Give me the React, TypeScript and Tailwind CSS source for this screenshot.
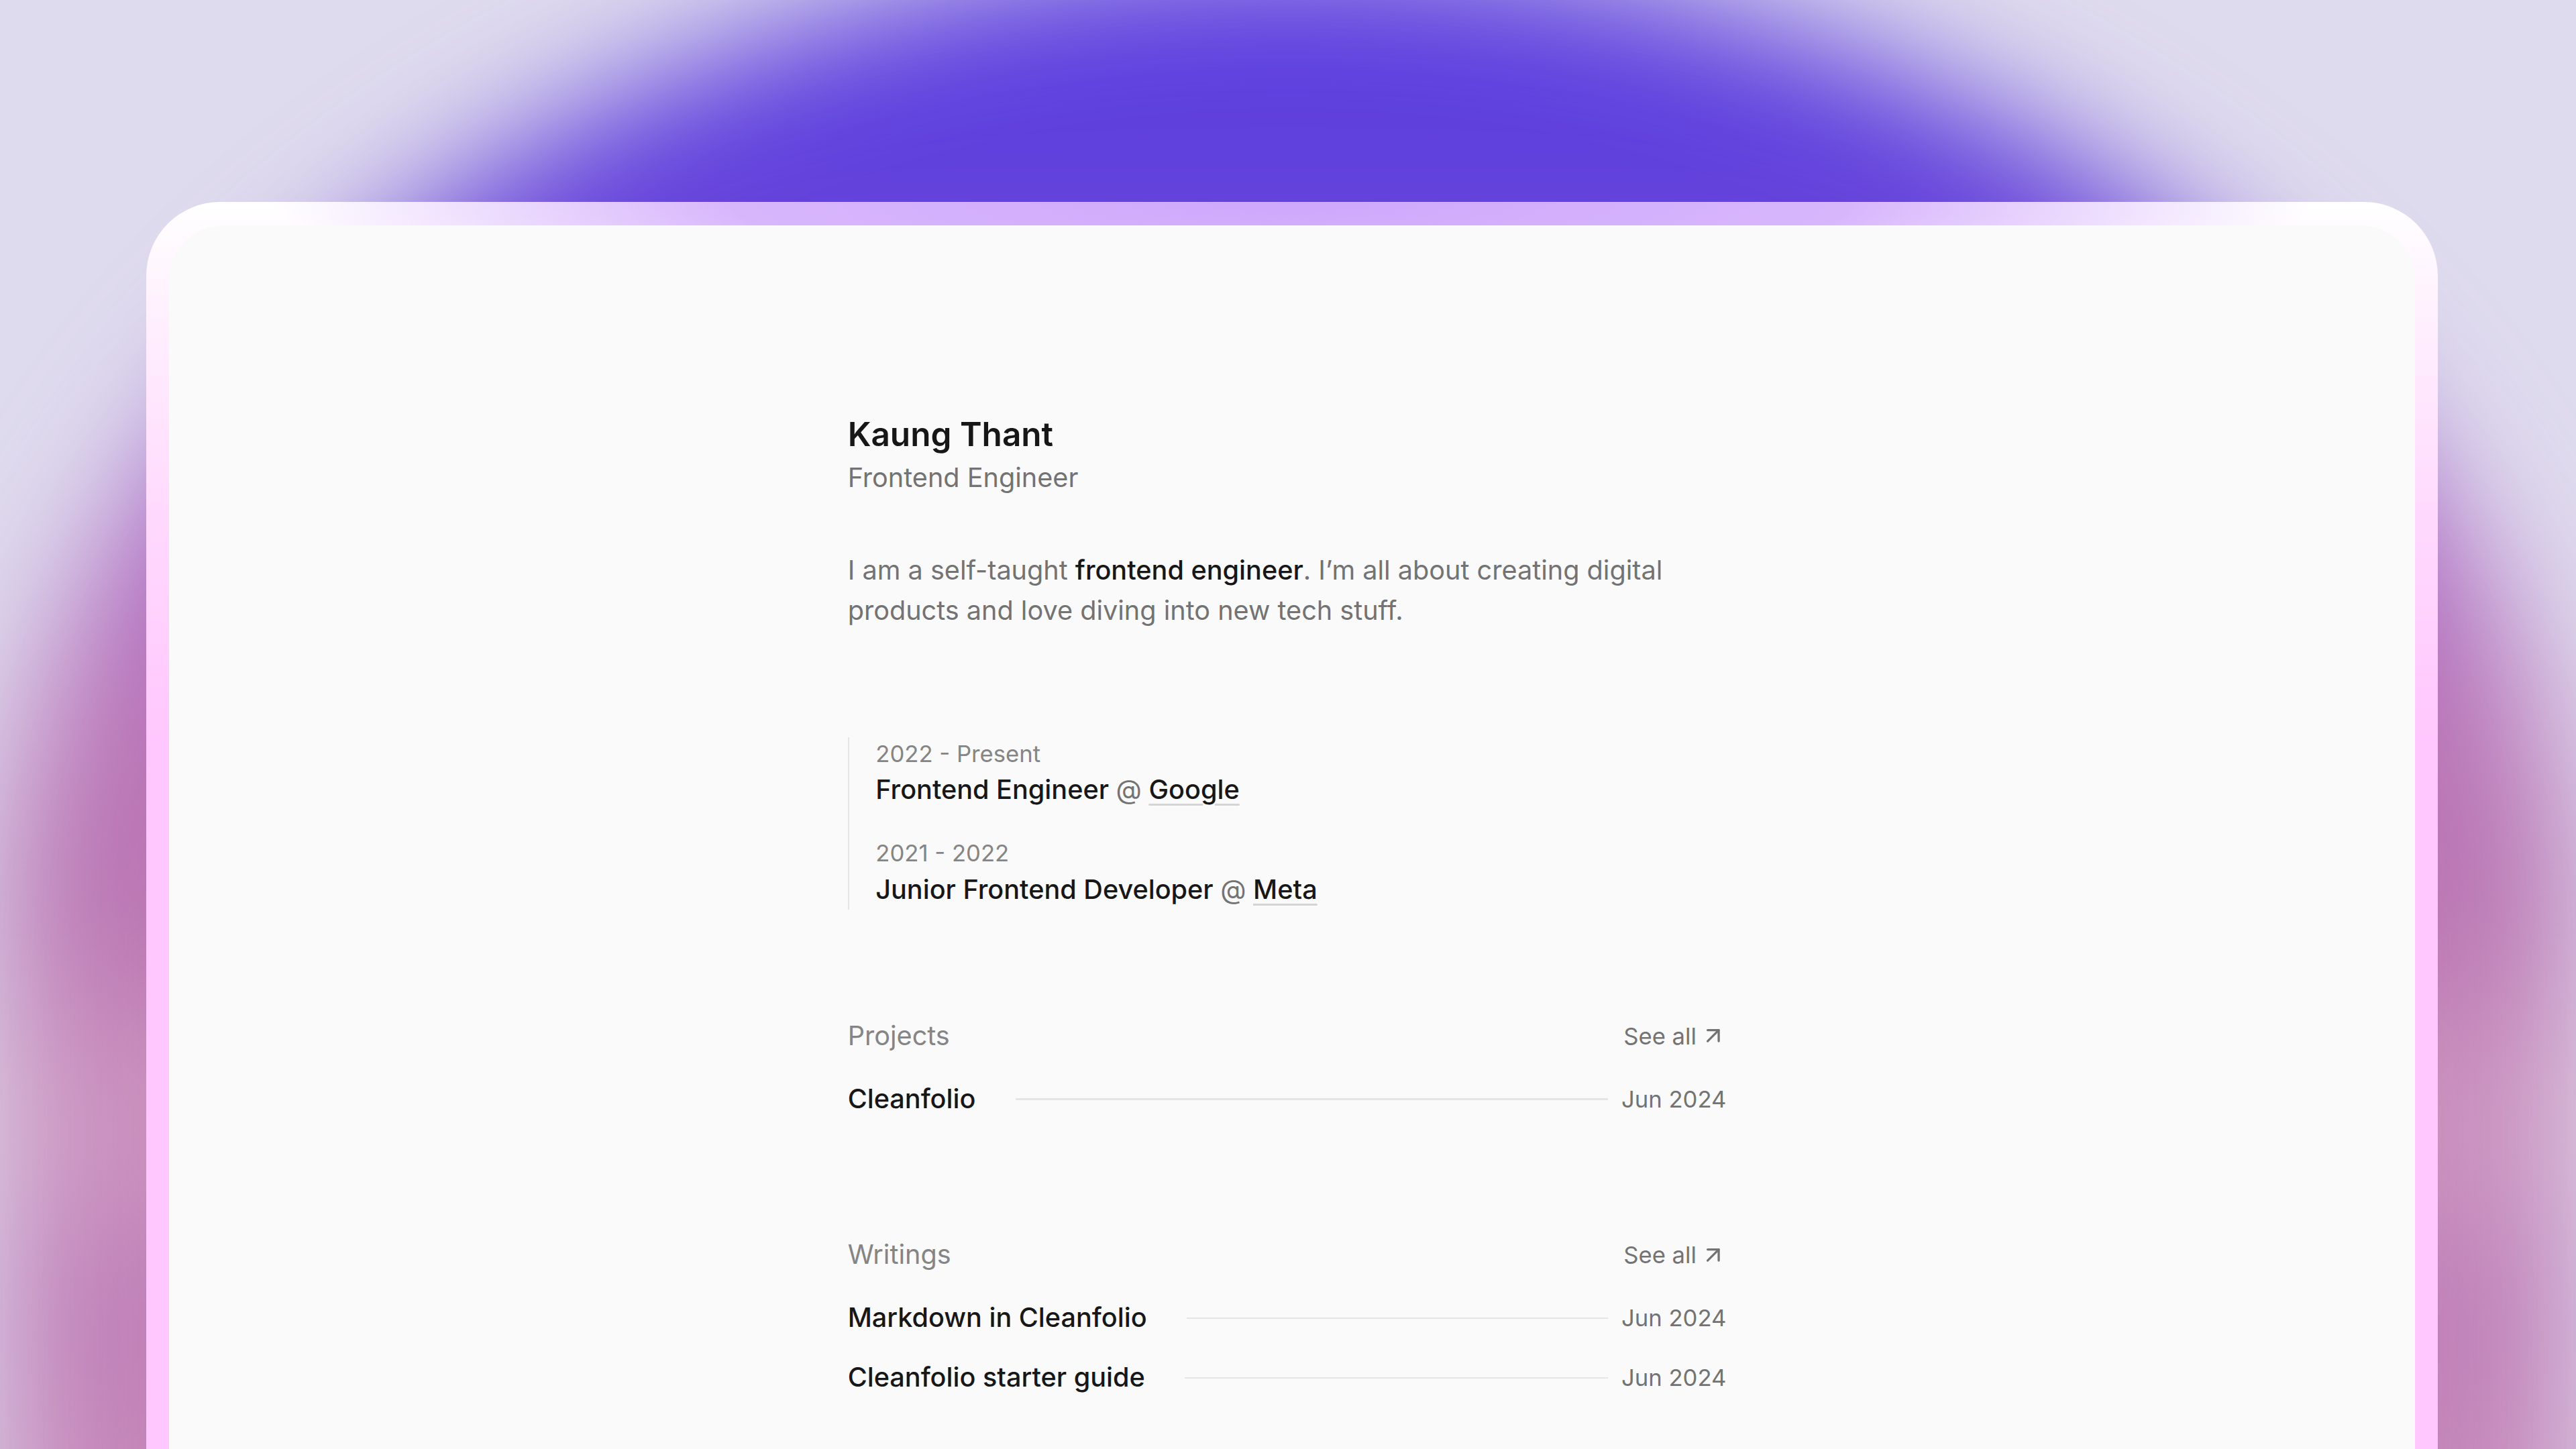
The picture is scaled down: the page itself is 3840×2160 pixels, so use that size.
import { ArrowUpRight } from "lucide-react";

type Job = {
  period: string;
  role: string;
  company: string;
};

type Entry = {
  title: string;
  date: string;
};

const jobs: Job[] = [
  { period: "2022 - Present", role: "Frontend Engineer", company: "Google" },
  { period: "2021 - 2022", role: "Junior Frontend Developer", company: "Meta" },
];

const projects: Entry[] = [{ title: "Cleanfolio", date: "Jun 2024" }];

const writings: Entry[] = [
  { title: "Markdown in Cleanfolio", date: "Jun 2024" },
  { title: "Cleanfolio starter guide", date: "Jun 2024" },
];

function ListSection({ title, items }: { title: string; items: Entry[] }) {
  return (
    <section className="mt-16">
      <div className="flex items-center justify-between">
        <h2 className="text-base text-[#858585]">{title}</h2>
        <a className="flex items-center gap-0.5 text-sm text-neutral-500" href="#">
          See all
          <ArrowUpRight className="h-4 w-4" />
        </a>
      </div>
      <ul className="mt-2">
        {items.map((item) => (
          <li className="flex items-center py-1.5" key={item.title}>
            <span className="font-medium text-neutral-900">{item.title}</span>
            <span className="ml-6 mr-2 h-px flex-1 bg-neutral-200" />
            <span className="text-sm text-neutral-500">{item.date}</span>
          </li>
        ))}
      </ul>
    </section>
  );
}

export default function App() {
  return (
    <div className="relative h-[882px] w-[1568px] overflow-hidden bg-[#dfdbee] font-['Inter',sans-serif] [zoom:2.449]">
      {/* glow behind the window */}
      <div className="absolute inset-x-0 -top-[30px] -bottom-[200px] rounded-t-[50%_55%] blur-[40px] [background-image:linear-gradient(to_bottom,#5b3fe0_0%,#5f40dd_12%,#7048d4_20%,#a862c2_30%,#bb76b6_43%,#b874b2_52%,#c485b8_58%,#cc95c0_64%,#c88fbe_68%,#bd7cb6_74%,#c587b9_82%)]" />

      <div className="relative ml-[89px] mt-[123px] w-[1395px] rounded-t-[45px] px-[14px] pt-[14px] [background-image:radial-gradient(620px_80px_at_50%_0%,#cea8fc_0%,#d8b6fc_55%,transparent_100%),linear-gradient(to_bottom,#ffffff_0px,#ffeefe_80px,#ffd9fd_190px,#ffc7fd_330px)]">
        <main className="rounded-t-[33px] bg-[#fafafa] pb-40 pt-[113.5px]">
          <div className="ml-[408.5px] w-[529px] text-base text-neutral-900 [zoom:1.011]">
            <header>
              <h1 className="text-xl font-semibold text-neutral-900">Kaung Thant</h1>
              <p className="text-neutral-500">Frontend Engineer</p>
            </header>

            <p className="mt-8 leading-6 text-neutral-500">
              I am a self-taught <span className="font-medium text-neutral-900">frontend engineer</span>.
              I’m all about creating digital products and love diving into new tech stuff.
            </p>

            <ol className="mt-16 flex flex-col gap-4 border-l border-neutral-200 pl-4">
              {jobs.map((job) => (
                <li key={job.period}>
                  <p className="text-sm text-[#858585]">{job.period}</p>
                  <p className="font-medium text-neutral-900">
                    {job.role} <span className="font-normal text-neutral-500">@</span>{" "}
                    <a
                      className="underline decoration-[#d4d4d4] underline-offset-[3px]"
                      href="#"
                    >
                      {job.company}
                    </a>
                  </p>
                </li>
              ))}
            </ol>

            <ListSection items={projects} title="Projects" />
            <ListSection items={writings} title="Writings" />
          </div>
        </main>
      </div>
    </div>
  );
}
